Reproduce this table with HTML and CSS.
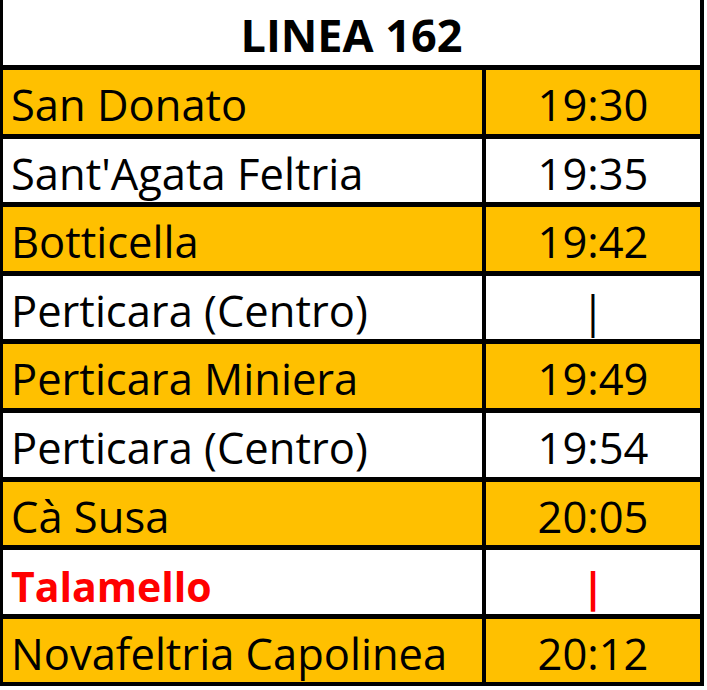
FILE: index.html
```html
<!DOCTYPE html>
<html lang="it">
<head>
    <meta charset="UTF-8">
    <meta name="viewport" content="width=device-width, initial-scale=1.0">
    <title>Linea 162</title>
    <link rel="stylesheet" href="styles.css">
</head>
<body>

<div class="orario">
    <div class="titolo">LINEA 162</div>

    <div class="fermata gialla">San Donato</div>
    <div class="ora gialla">19:30</div>

    <div class="fermata">Sant'Agata Feltria</div>
    <div class="ora">19:35</div>

    <div class="fermata gialla">Botticella</div>
    <div class="ora gialla">19:42</div>

    <div class="fermata">Perticara (Centro)</div>
    <div class="ora">|</div>

    <div class="fermata gialla">Perticara Miniera</div>
    <div class="ora gialla">19:49</div>

    <div class="fermata">Perticara (Centro)</div>
    <div class="ora">19:54</div>

    <div class="fermata gialla">Cà Susa</div>
    <div class="ora gialla">20:05</div>

    <div class="fermata rossa">Talamello</div>
    <div class="ora rossa">|</div>

    <div class="fermata gialla">Novafeltria Capolinea</div>
    <div class="ora gialla">20:12</div>
</div>

</body>
</html>
```

FILE: styles.css
```css
/* Tabella orari */
body {
    margin: 0;
    background: #fff;
    font-family: "Open Sans", "Noto Sans", sans-serif;
    color: #000;
}

.orario {
    width: 704px;
    box-sizing: border-box;
    display: grid;
    grid-template-columns: 479px 214px;
    grid-template-rows: 65px repeat(9, 63.6px);
    column-gap: 4px;
    row-gap: 5px;
    padding: 0 4px 4px 3px;
    background: #000;
}

.titolo {
    grid-column: 1 / 3;
    background: #fff;
    text-align: center;
    font-weight: 700;
    font-size: 45px;
    line-height: 60px;
    padding-top: 5px;
    box-sizing: border-box;
}

.fermata, .ora {
    background: #fff;
    font-size: 43.5px;
    line-height: 56px;
    padding-top: 7px;
    box-sizing: border-box;
    white-space: nowrap;
}

.fermata {
    padding-left: 8px;
}

.ora {
    text-align: center;
}

.gialla {
    background: #ffc000;
}

.rossa {
    color: #f00;
    font-weight: 700;
    font-size: 41px;
    padding-top: 8px;
}
```
